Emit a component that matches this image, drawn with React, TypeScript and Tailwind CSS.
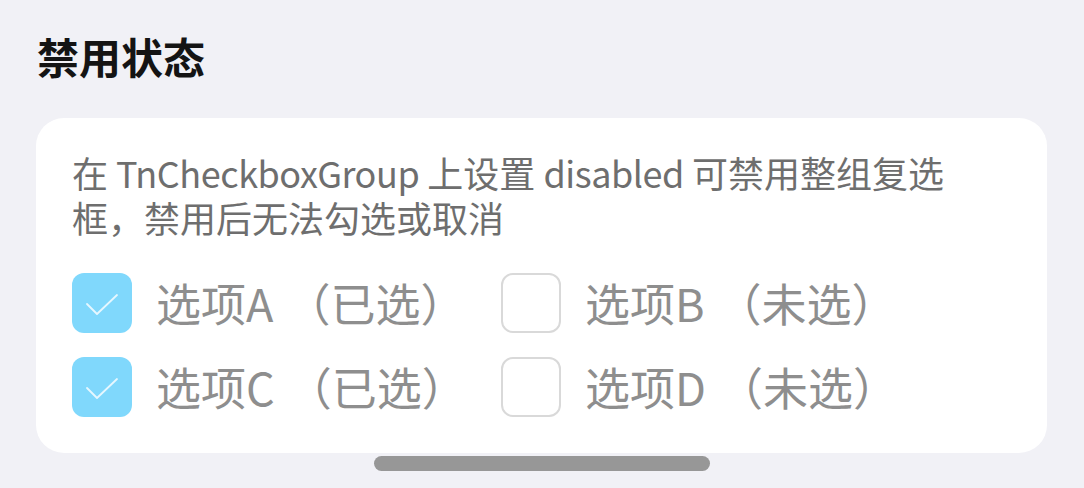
import React from "react";

const font = { fontFamily: '"Noto Sans CJK SC", "Noto Sans", sans-serif' };

function Box({ checked }: { checked: boolean }) {
  if (checked) {
    return (
      <div className="w-[60px] h-[60px] rounded-[12px] bg-[#80d8fc] flex items-center justify-center shrink-0">
        <svg width="60" height="60" viewBox="0 0 60 60" fill="none">
          <path d="M15 31 L25 41 L45 22" stroke="#ffffff" strokeOpacity="0.8" strokeWidth="1.8" strokeLinecap="round" strokeLinejoin="round" />
        </svg>
      </div>
    );
  }
  return <div className="w-[60px] h-[60px] rounded-[12px] border-2 border-[#d9d9d9] bg-white shrink-0" />;
}

function Item({ checked, name, state }: { checked: boolean; name: string; state: string }) {
  return (
    <div className="flex items-center gap-[24px] h-[60px]">
      <Box checked={checked} />
      <span className="text-[45px] leading-[60px] text-[#8e8e8e] whitespace-nowrap">
        {name}
        <span className="ml-[12px]">（{state}）</span>
      </span>
    </div>
  );
}

export default function App() {
  return (
    <div className="relative w-full h-[488px] overflow-hidden bg-[#f1f1f6] px-[36px] pt-[32px]" style={font}>
      <h1 className="text-[42px] leading-[48px] font-bold text-[#141414] mb-[38px] pl-[1px]">禁用状态</h1>
      <div className="bg-white rounded-[28px] pl-[36px] pr-[36px] pt-[32px] pb-[36px] w-[1011px]">
        <p className="text-[36px] leading-[45px] text-[#6e6e6e]">
          <span className="block whitespace-nowrap">
            在 <span className="inline-block tracking-[-0.45px]">TnCheckboxGroup</span> 上设置{" "}
            <span className="inline-block tracking-[-0.45px]">disabled</span> 可禁用整组复选
          </span>
          <span className="block whitespace-nowrap">框，禁用后无法勾选或取消</span>
        </p>
        <div className="grid grid-cols-[429px_1fr] gap-y-[24px] mt-[33px]">
          <Item checked name="选项A" state="已选" />
          <Item checked={false} name="选项B" state="未选" />
          <Item checked name="选项C" state="已选" />
          <Item checked={false} name="选项D" state="未选" />
        </div>
      </div>
      <div className="absolute left-[374px] top-[456px] w-[336px] h-[15px] rounded-full bg-[#979797]" />
    </div>
  );
}
